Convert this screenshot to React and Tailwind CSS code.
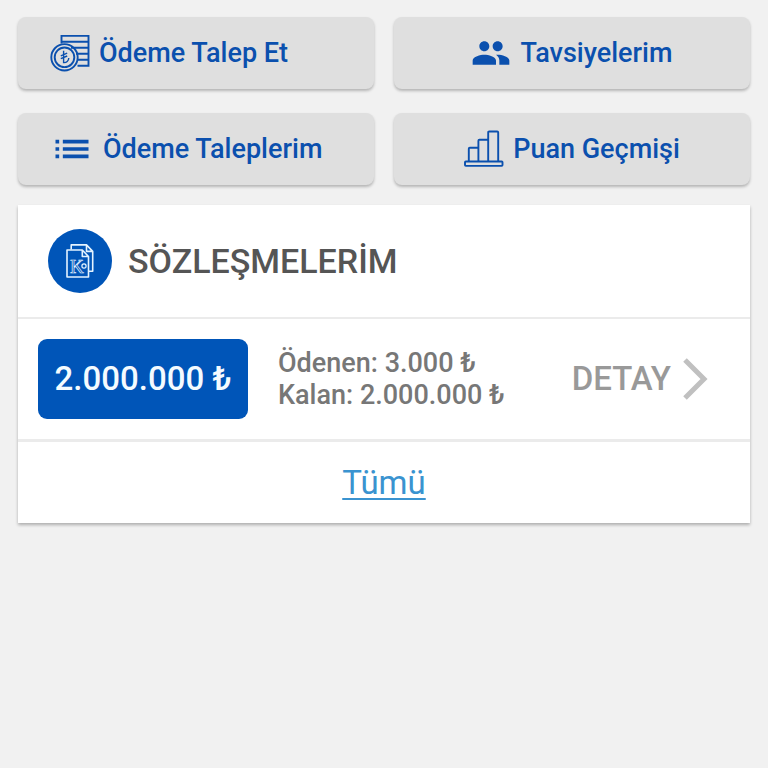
import { MdList, MdPeople } from 'react-icons/md'

function CoinsIcon() {
  return (
    <svg width="40" height="38" viewBox="0 0 40 38" fill="none" stroke="currentColor" strokeWidth="1.9" className="shrink-0" aria-hidden="true">
      <path d="M11.5 9.5V1.9h27v29.8H27.5M11.5 7.7h27M21 13.7h17.5M26 19.7h12.5M27.5 25.7h11" />
      <circle cx="14.5" cy="23.3" r="13.2" />
      <circle cx="14.5" cy="23.3" r="9.8" />
      <path d="M13.6 16.8v11.8c3 .2 5-1.6 5.2-4.6M10.8 21.8l6.4-2.6M10.8 24.6l6.4-2.6" strokeWidth="1.4" />
    </svg>
  )
}

function BarsIcon() {
  return (
    <svg width="40" height="38" viewBox="0 0 40 38" fill="none" stroke="currentColor" strokeWidth="1.9" strokeLinejoin="round" className="shrink-0" aria-hidden="true">
      <rect x="1" y="31.5" width="37.5" height="4.4" rx="0.8" />
      <path d="M4.8 31.5V18.7q0-1 1-1h8.3M14.4 31.5V10.7q0-1 1-1h8.3M24.2 31.5V2.5q0-1 1-1h8q1 0 1 1v29" />
    </svg>
  )
}

function ContractIcon() {
  return (
    <svg width="64" height="64" viewBox="0 0 64 64" fill="none" stroke="#e4f3ff" strokeWidth="1.6" strokeLinejoin="round" className="shrink-0" aria-hidden="true">
      <circle cx="32" cy="32" r="32" fill="#0055b8" stroke="none" />
      <path d="M23.2 20.5v-4.6h15.3l6.2 6.5v19.8h-4.2M38.5 15.9v6.5h6.2" />
      <path d="M19 21h15.3l6.2 6.5V48H19zM34.3 21v6.5h6.2" />
      <text x="22" y="44" fontFamily="Liberation Serif, serif" fontSize="19" strokeWidth="0.7">K</text>
      <circle cx="36" cy="37" r="2.1" strokeWidth="1.2" />
    </svg>
  )
}

const menu = [
  { label: 'Ödeme Talep Et', icon: <CoinsIcon />, align: 'justify-start pl-8' },
  { label: 'Tavsiyelerim', icon: <MdPeople size={40} className="shrink-0" />, align: 'justify-center' },
  { label: 'Ödeme Taleplerim', icon: <MdList size={44} className="shrink-0" />, align: 'justify-start pl-8' },
  { label: 'Puan Geçmişi', icon: <BarsIcon />, align: 'justify-center' },
]

export default function App() {
  return (
    <div className="min-h-screen bg-[#f1f1f1] px-[18px] pt-[17px] font-['Roboto',sans-serif]">
      <div className="grid grid-cols-2 gap-x-5 gap-y-6">
        {menu.map((item) => (
          <button
            key={item.label}
            type="button"
            className={`flex h-[72px] items-center gap-[9px] rounded-lg bg-[#dfdfdf] text-[27px] font-medium text-[#0b50ae] shadow-[0_2px_3px_rgba(0,0,0,0.25)] ${item.align}`}
          >
            {item.icon}
            <span>{item.label}</span>
          </button>
        ))}
      </div>

      <section className="mt-5 bg-white shadow-[0_2px_3px_rgba(0,0,0,0.28)]">
        <header className="flex h-[114px] items-center gap-4 border-b-2 border-[#ebebeb] px-[30px]">
          <ContractIcon />
          <h2 className="text-[34px] font-medium text-[#555]">SÖZLEŞMELERİM</h2>
        </header>

        <div className="flex h-[123px] items-center border-b-3 border-[#ebebeb] pl-5 pr-[42px]">
          <div className="flex h-20 w-[210px] items-center justify-center rounded-[9px] bg-[#0055b8] text-[33px] font-medium text-[#f4fbff]">
            2.000.000 ₺
          </div>
          <div className="ml-[30px] text-[27px] leading-8 font-medium text-[#777]">
            <p>Ödenen: 3.000 ₺</p>
            <p>Kalan: 2.000.000 ₺</p>
          </div>
          <a href="#detay" className="ml-auto flex items-center gap-3 text-[33px] font-medium text-[#999]">
            DETAY
            <svg width="25" height="42" viewBox="0 0 25 42" fill="none" stroke="#c0c0c0" strokeWidth="5" aria-hidden="true">
              <path d="M2 2l19 19L2 40" />
            </svg>
          </a>
        </div>

        <div className="flex h-[81px] items-center justify-center">
          <a href="#tumu" className="text-[33px] text-[#3a93d0] underline decoration-2 underline-offset-4">Tümü</a>
        </div>
      </section>
    </div>
  )
}
